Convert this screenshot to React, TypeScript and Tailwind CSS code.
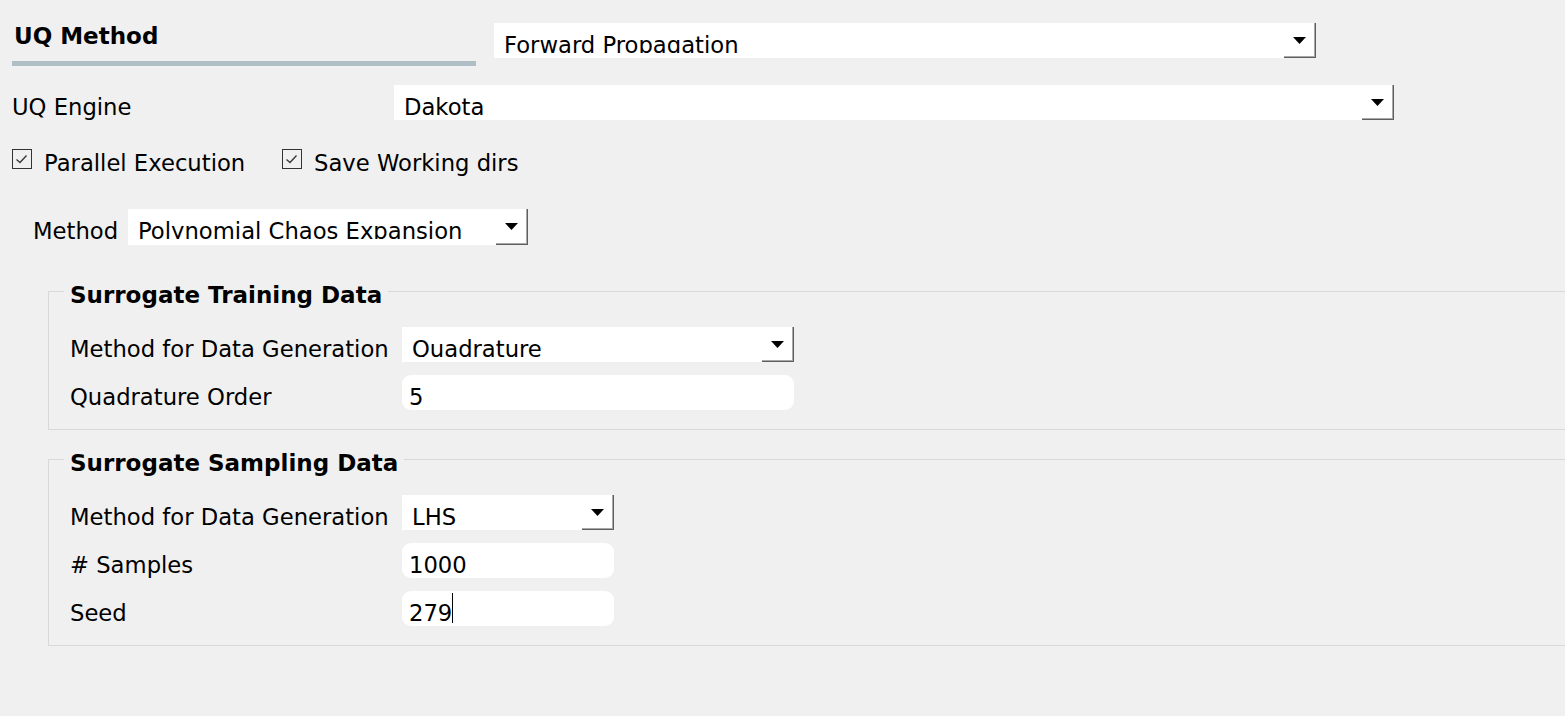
import React from "react";

const Arrow = () => (
  <svg width="13" height="7" viewBox="0 0 13 7">
    <path d="M0 0H13L6.5 7Z" fill="#000" />
  </svg>
);

function Combo({ text, cls }: { text: string; cls: string }) {
  return (
    <div className={`flex h-[35px] shrink-0 bg-white ${cls}`}>
      <div className="h-[30px] flex-1 overflow-hidden whitespace-nowrap pl-[10px] pt-[9px] leading-[normal]">
        {text}
      </div>
      <div className="flex h-full w-[32px] items-center justify-center border-r border-b border-[#5f5f5f] shadow-[inset_-1px_-1px_0_#a8a8a8]">
        <Arrow />
      </div>
    </div>
  );
}

function Field({ text, cls, cursor }: { text: string; cls: string; cursor?: boolean }) {
  return (
    <div className={`flex h-[35px] shrink-0 items-start rounded-[9px] bg-white pl-[7px] ${cls}`}>
      <div className="pt-[9px] leading-[normal] whitespace-nowrap">{text}</div>
      {cursor && <div className="mt-[2px] h-[30px] w-px bg-black" />}
    </div>
  );
}

function Check({ label, cls }: { label: string; cls: string }) {
  return (
    <div className={`flex items-start ${cls}`}>
      <div className="h-[20px] w-[20px] shrink-0 border border-[#333333]">
        <svg width="18" height="18" viewBox="0 0 18 18">
          <polyline points="3.5,9.5 7,12.5 13.5,5.5" fill="none" stroke="#3a3a3a" strokeWidth="1.4" />
        </svg>
      </div>
      <div className="ml-[12px] mt-[1px] leading-[26px] whitespace-nowrap">{label}</div>
    </div>
  );
}

function Row({ label, children }: { label: string; children: React.ReactNode }) {
  return (
    <div className="flex h-[35px] items-start pl-[21px]">
      <div className="w-[332px] shrink-0 pt-[9px] leading-[normal] whitespace-nowrap">{label}</div>
      {children}
    </div>
  );
}

function Group({ title, children }: { title: string; children: React.ReactNode }) {
  return (
    <div className="ml-[48px] w-[1560px] border border-[#d9d9d9] pb-[19px]">
      <div className="-mt-[10px] ml-[15px] w-fit bg-[#f0f0f0] px-[6px] text-[23px] font-bold leading-[27px]">
        {title}
      </div>
      <div className="mt-[18px] flex flex-col gap-[13px]">{children}</div>
    </div>
  );
}

export default function App() {
  return (
    <div className="h-[716px] w-[1565px] overflow-hidden bg-[#f0f0f0] font-['DejaVu_Sans',sans-serif] text-[22.7px] text-black">
      <div className="pl-[12px] pt-[23px]">
        <div className="flex items-start">
          <div className="w-[464px] shrink-0">
            <div className="pl-[2px] text-[23px] font-bold leading-[27px]">UQ Method</div>
            <div className="mt-[11px] h-[5px] bg-[#b0bec5]" />
          </div>
          <Combo text="Forward Propagation" cls="ml-[18px] w-[822px]" />
        </div>

        <div className="mt-[19px] flex h-[35px] items-start">
          <div className="w-[382px] shrink-0 pt-[9px] leading-[normal]">UQ Engine</div>
          <Combo text="Dakota" cls="w-[1000px]" />
        </div>

        <div className="mt-[29px] flex h-[27px] items-start">
          <Check label="Parallel Execution" cls="w-[270px]" />
          <Check label="Save Working dirs" cls="" />
        </div>

        <div className="mt-[33px] flex h-[36px] items-start pl-[21px]">
          <div className="w-[95px] shrink-0 pt-[9px] leading-[normal]">Method</div>
          <Combo text="Polynomial Chaos Expansion" cls="w-[400px] !h-[36px]" />
        </div>
      </div>

      <div className="mt-[46px]">
        <Group title="Surrogate Training Data">
          <Row label="Method for Data Generation">
            <Combo text="Quadrature" cls="w-[392px]" />
          </Row>
          <Row label="Quadrature Order">
            <Field text="5" cls="w-[392px]" />
          </Row>
        </Group>
      </div>

      <div className="mt-[29px]">
        <Group title="Surrogate Sampling Data">
          <Row label="Method for Data Generation">
            <Combo text="LHS" cls="w-[212px]" />
          </Row>
          <Row label="# Samples">
            <Field text="1000" cls="w-[212px]" />
          </Row>
          <Row label="Seed">
            <Field text="279" cls="w-[212px]" cursor />
          </Row>
        </Group>
      </div>
    </div>
  );
}
